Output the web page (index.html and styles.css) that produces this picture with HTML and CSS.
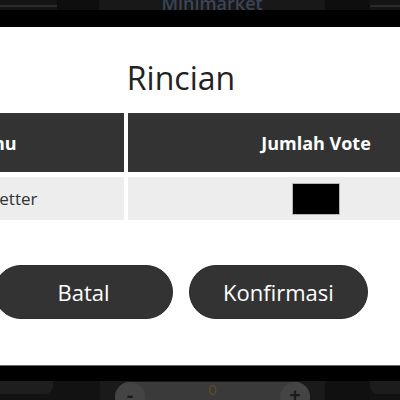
FILE: index.html
```html
<!DOCTYPE html>
<html lang="id">
<head>
<meta charset="utf-8">
<title>Rincian</title>
<link rel="stylesheet" href="styles.css">
</head>
<body>
<div class="screen">
  <div class="bg-top">
    <div class="bt-left"><span class="bt-line"></span></div>
    <div class="bt-box"></div>
    <div class="bt-title">Minimarket</div>
    <div class="bt-box bt-box-r"></div>
    <div class="bt-right"><span class="bt-line"></span></div>
  </div>
  <div class="black-bar black-top"></div>
  <div class="modal">
    <div class="modal-inner">
      <h1 class="modal-title">Rincian</h1>
      <div class="vote-table">
        <div class="cell head">Menu</div>
        <div class="cell head">Jumlah Vote</div>
        <div class="cell body">Trendsetter</div>
        <div class="cell body"><span class="vote-box"></span></div>
      </div>
      <div class="actions">
        <button class="btn">Batal</button>
        <button class="btn">Konfirmasi</button>
      </div>
    </div>
  </div>
  <div class="black-bar black-bottom"></div>
  <div class="bg-bottom">
    <div class="bb-left"><span class="bb-card"></span></div>
    <div class="bb-mid">
      <div class="stepper">
        <span class="step-btn">-</span>
        <span class="step-val">0</span>
        <span class="step-btn">+</span>
      </div>
    </div>
    <div class="bb-gap"></div>
    <div class="bb-right"><span class="bb-card bb-card-r"></span></div>
  </div>
</div>
</body>
</html>
```

FILE: styles.css
```css
* { box-sizing: border-box; }
html, body {
  margin: 0;
  padding: 0;
  width: 400px;
  height: 400px;
  overflow: hidden;
  background: #121212;
  font-family: "Open Sans", "Noto Sans", sans-serif;
}
.screen {
  width: 400px;
  height: 400px;
  display: flex;
  flex-direction: column;
  overflow: hidden;
}

/* dimmed background content, top */
.bg-top {
  height: 10px;
  flex: none;
  display: flex;
  overflow: hidden;
  background: #141414;
}
.bt-left, .bt-right {
  display: flex;
  align-items: flex-start;
  padding-top: 5px;
}
.bt-left { width: 57px; }
.bt-right { width: 30px; }
.bt-line {
  display: block;
  width: 100%;
  height: 2px;
  background: #2a2a2a;
}
.bt-box { width: 42px; background: #0e0e0e; }
.bt-box-r { width: 45px; }
.bt-title {
  width: 226px;
  background: #181818;
  color: #3a4556;
  font-size: 18px;
  font-weight: 600;
  line-height: 20px;
  text-align: center;
  margin-top: -7px;
  height: 28px;
}

.black-bar { background: #000; flex: none; }
.black-top { height: 17px; }
.black-bottom { height: 15px; }

/* modal */
.modal {
  height: 339px;
  flex: none;
  background: #fff;
  border-bottom: 1px solid #6a6a6a;
  padding-top: 29px;
  overflow: hidden;
}
.modal-inner {
  width: 646px;
  margin-left: -142px;
  display: flex;
  flex-direction: column;
  align-items: center;
}
.modal-title {
  margin: 0;
  font-size: 32px;
  line-height: 44px;
  font-weight: 400;
  color: #222;
}
.vote-table {
  margin-top: 13px;
  width: 646px;
  display: grid;
  grid-template-columns: 266px 376px;
  grid-template-rows: 59px 43px;
  column-gap: 4px;
  row-gap: 5px;
}
.cell {
  display: flex;
  align-items: center;
  justify-content: center;
}
.cell.head {
  background: #333;
  color: #fff;
  font-weight: 700;
  font-size: 18px;
}
.cell.body {
  background: #ededed;
  color: #333;
  font-size: 17px;
}
.vote-box {
  width: 48px;
  height: 32px;
  background: #000;
  border: 1px solid #b5b5b5;
  margin-top: 1px;
}
.actions {
  margin-top: 45px;
  display: flex;
  gap: 16px;
}
.btn {
  width: 179px;
  height: 54px;
  border-radius: 27px;
  background: #333;
  border: 1px solid #2a2a2a;
  color: #fff;
  font-family: "Open Sans", "Noto Sans", sans-serif;
  font-size: 22px;
  padding: 0;
}

/* dimmed background content, bottom */
.bg-bottom {
  flex: 1;
  display: flex;
  background: #121212;
}
.bb-left { width: 100px; }
.bb-right { width: 30px; }
.bb-gap { width: 45px; background: #101010; }
.bb-card {
  display: block;
  width: 53px;
  height: 13px;
  background: #1e1e1e;
  border-bottom-right-radius: 8px;
}
.bb-card-r {
  width: 30px;
  border-bottom-right-radius: 0;
  border-bottom-left-radius: 8px;
  background: #1c1c1c;
}
.bb-mid {
  width: 225px;
  background: #1a1a1a;
  padding: 1px 0 0 15px;
}
.stepper {
  width: 195px;
  height: 30px;
  border-radius: 15px;
  background: #3a3a3a;
  display: flex;
  justify-content: space-between;
  align-items: flex-start;
}
.step-btn {
  width: 30px;
  height: 30px;
  border-radius: 50%;
  background: #444;
  color: #1a1a1a;
  font-weight: 700;
  font-size: 20px;
  line-height: 26px;
  text-align: center;
}
.step-val {
  color: #5c4c22;
  font-size: 15px;
  line-height: 14px;
}
```
